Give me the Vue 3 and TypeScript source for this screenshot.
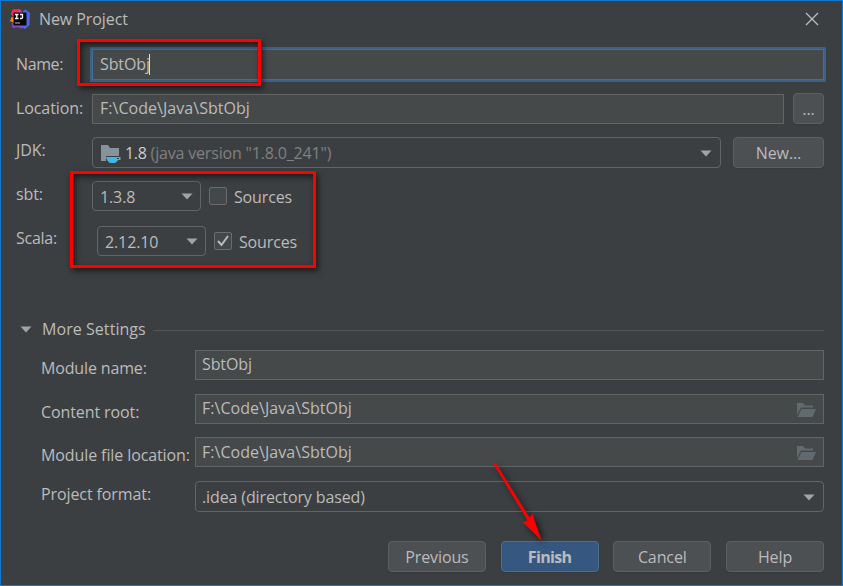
<script setup lang="ts">
import { ref } from 'vue'

const projectName = ref('SbtObj')
const location = ref('F:\\Code\\Java\\SbtObj')
const sbtSources = ref(false)
const scalaSources = ref(true)
</script>

<template>
  <main class="dialog">
    <header class="titlebar">
      <svg class="logo" width="20" height="20" viewBox="0 0 20 20">
        <path d="M2.500.5 10 0l3 4-8 11-3-3 1-4-2-3z" fill="#f52b61" />
        <path d="M1 8.500 4 8v6l-4-2 1-2z" fill="#fc801d" />
        <path d="m13 2 2.500-1.500L20 4l-.5 12-4.500 4-5-3z" fill="#4a68e8" />
        <path d="m2 14 9 2 2 4-5-2-5.500 1z" fill="#8f48cc" />
        <path d="m9 1 4 3H8z" fill="#c645aa" />
        <rect x="3.500" y="3.500" width="13" height="13" fill="#08080b" />
        <path d="M5 5.500h3.500M6.800 5.500v4M5 9.500h3.500M10 5.500h2.500v3q0 1-1.300 1H10" fill="none" stroke="#fff" stroke-width="1.300" />
        <path d="M5 14h5" stroke="#999" stroke-width="1.200" />
      </svg>
      <span class="title">New Project</span>
      <svg class="close" width="14" height="14" viewBox="0 0 14 14"><path d="m1 1 12 12M13 1 1 13" stroke="#bec0c1" stroke-width="1.200" /></svg>
    </header>

    <section class="general">
      <div class="row name-row">
        <label>Name:</label>
        <div class="field focused"><span class="value">{{ projectName }}</span><i class="caret" /></div>
      </div>
      <div class="row location-row">
        <label>Location:</label>
        <div class="field"><span class="value path">{{ location }}</span></div>
        <button class="browse">...</button>
      </div>
      <div class="row jdk-row">
        <label>JDK:</label>
        <div class="combo">
          <svg class="jdk" width="20" height="18" viewBox="0 0 20 18">
            <path d="M0 0h7l2 3h9v8H5v5H0z" fill="#87939a" />
            <path d="M5 12h14.500v3H17q-.8 2-3 3H9q-3-1.500-4-6z" fill="#40b6e0" />
            <path d="M16 13h2v1h-2z" fill="#3c3f41" />
          </svg>
          <span class="version">1.8</span><span class="muted">(java version "1.8.0_241")</span>
          <svg class="arrow" width="12" height="7" viewBox="0 0 12 7"><path d="M.5.500h11L6 6.500z" /></svg>
        </div>
        <button class="new">New...</button>
      </div>
      <div class="row sbt-row">
        <label>sbt:</label>
        <div class="combo small"><span class="num">1.3.8</span><svg class="arrow" width="12" height="7" viewBox="0 0 12 7"><path d="M.5.500h11L6 6.500z" /></svg></div>
        <span class="check" @click="sbtSources = !sbtSources"><svg v-if="sbtSources" width="14" height="14" viewBox="0 0 14 14"><path d="m2 7 3.500 4L12 2" /></svg></span>
        <span class="sources">Sources</span>
      </div>
      <div class="row scala-row">
        <label>Scala:</label>
        <div class="combo small"><span class="num">2.12.10</span><svg class="arrow" width="12" height="7" viewBox="0 0 12 7"><path d="M.5.500h11L6 6.500z" /></svg></div>
        <span class="check" @click="scalaSources = !scalaSources"><svg v-if="scalaSources" width="14" height="14" viewBox="0 0 14 14"><path d="m2 7 3.500 4L12 2" /></svg></span>
        <span class="sources">Sources</span>
      </div>
    </section>

    <div class="separator">
      <svg class="arrow" width="12" height="7" viewBox="0 0 12 7"><path d="M.5.500h11L6 6.500z" /></svg>
      <span class="heading">More Settings</span><hr>
    </div>

    <section class="more">
      <div class="row module-row"><label>Module name:</label><div class="field"><span class="value">{{ projectName }}</span></div></div>
      <div class="row root-row">
        <label>Content root:</label>
        <div class="field"><span class="value path">{{ location }}</span>
          <svg class="folder" width="20" height="15" viewBox="0 0 20 15"><path d="M0 0h6l2 2.500h8v2H4L0 12z" /><path d="M4.500 6H19l-3.500 8H.5z" /></svg>
        </div>
      </div>
      <div class="row file-row">
        <label class="long">Module file location:</label>
        <div class="field"><span class="value path">{{ location }}</span>
          <svg class="folder" width="20" height="15" viewBox="0 0 20 15"><path d="M0 0h6l2 2.500h8v2H4L0 12z" /><path d="M4.500 6H19l-3.500 8H.5z" /></svg>
        </div>
      </div>
      <div class="row format-row">
        <label>Project format:</label>
        <div class="combo"><span class="format">.idea (directory based)</span><svg class="arrow" width="12" height="7" viewBox="0 0 12 7"><path d="M.5.500h11L6 6.500z" /></svg></div>
      </div>
    </section>

    <footer>
      <button>Previous</button>
      <button class="primary">Finish</button>
      <button>Cancel</button>
      <button>Help</button>
    </footer>

    <div class="mark mark-name" />
    <div class="mark mark-versions" />
    <svg class="pointer" width="70" height="90" viewBox="0 0 70 90"><path d="M13.500 13 16 12.500 49.500 66.500 52.500 63 61.500 89.500 42.500 71 47.500 69.500z" /></svg>
  </main>
</template>

<style>
body { background: #3c3f41; overflow: hidden; }
</style>

<style scoped>
* { box-sizing: border-box; }
.dialog { position: relative; width: 843px; height: 586px; border: 1px solid #1179cf; overflow: hidden; background: #3c3f41; color: #bbb; font: 16px/22px "Open Sans", "Noto Sans", sans-serif; white-space: nowrap; }
.titlebar { height: 46px; padding: 8px 22px 0 9px; display: flex; align-items: flex-start; }
.title { margin: -1px 0 0 9px; letter-spacing: -.08px; }
.close { margin: 3px 1px 0 auto; }
.general { height: 266px; padding-left: 15px; }
.row { display: flex; align-items: flex-start; }
label { letter-spacing: -.1px; }
.general label { width: 76px; flex: none; }
.name-row label { letter-spacing: -.4px; }
.scala-row label { letter-spacing: -.25px; }
.more label { width: 153.500px; flex: none; }
.field { height: 30px; border: 1px solid #646464; background: #45494a; display: flex; align-items: center; padding-left: 7px; }
.field .value { margin-top: -2px; letter-spacing: -.1px; }
.field .path { letter-spacing: .04px; }
.focused { position: relative; height: 35px; width: 736px; margin-left: -2px; border: 2px solid #3d6185; box-shadow: inset 0 0 0 1px #466d94; padding-left: 8px; border-radius: 1px; }
.caret { width: 1px; height: 21px; margin-left: -.6px; background: #ddd; }
.combo { height: 31px; border: 1px solid #646464; border-radius: 4px; display: flex; align-items: center; padding: 0 8px 0 7px; }
.arrow { fill: #a1a4a6; flex: none; }
.combo .arrow { margin: 1px 0 0 auto; }
.small .arrow { margin-right: -1px; }
button { height: 31px; padding: 0; border: 1px solid #5e6060; border-radius: 4px; background: #4c5052; color: #bbb; font: inherit; box-shadow: 0 1px 1px #373a3c; }
.name-row { height: 46px; }
.name-row label { padding-top: 6px; }
.location-row { height: 44px; }
.location-row label { padding-top: 4px; }
.location-row .field { width: 692px; margin-top: 1px; }
.browse { width: 31px; margin-left: 9px; }
.jdk-row { height: 44px; }
.jdk-row label { padding-top: 2px; }
.jdk-row .combo { width: 629px; }
.jdk { margin: 3px 4px 0 1px; }
.version { color: #ccc; margin-right: 4px; letter-spacing: -.3px; }
.muted { color: #808080; letter-spacing: -.18px; }
.new { width: 91px; margin-left: 12px; letter-spacing: -.1px; }
.sbt-row { height: 45px; }
.sbt-row label { padding-top: 2px; }
.scala-row label { padding-top: 1px; }
.small { width: 109px; height: 30px; }
.num { padding-top: 2px; letter-spacing: -.12px; }
.scala-row .small { margin-left: 5px; }
.check { width: 18px; height: 18px; margin: 6px 0 0 7.500px; border: 1px solid #6b6b6b; border-radius: 2px; background: #43494a; display: flex; align-items: center; justify-content: center; }
.check path { fill: none; stroke: #bbb; stroke-width: 2; }
.sources { margin: 5px 0 0 7.500px; letter-spacing: -.15px; }
.separator { height: 37px; padding: 5px 18px 0 19px; display: flex; align-items: flex-start; }
.separator .arrow { margin-top: 8px; }
.heading { margin-left: 10px; letter-spacing: .06px; }
.separator hr { flex: 1; height: 1px; border: 0; margin: 12px 0 0 7px; background: #515455; }
.more { padding-left: 40px; height: 191px; }
.more .field, .more .combo { width: 629px; padding-left: 6.500px; }
.module-row, .file-row { height: 44px; }
.root-row { height: 43px; }
.module-row label, .root-row label, .file-row label { padding-top: 7px; }
.module-row label { letter-spacing: -.15px; }
.format-row label { padding-top: 2px; }
.file-row .value { margin-top: 0; }
.file-row .folder { margin-top: 3px; }
.format { letter-spacing: -.12px; }
.folder { margin: 2px 6px 0 auto; fill: #616a6f; }
footer { display: flex; justify-content: flex-end; gap: 14.700px; padding-right: 18px; }
footer button { width: 98px; letter-spacing: -.1px; }
footer .primary { background: #365880; border-color: #4c708c; font-weight: bold; letter-spacing: -.65px; }
.mark { position: absolute; border: 3px solid #f00; box-shadow: 2px 3px 6px #0009, inset 2px 3px 6px #0009; pointer-events: none; }
.mark-name { left: 76px; top: 38px; width: 184px; height: 47px; }
.mark-versions { left: 69px; top: 170px; width: 246px; height: 97px; }
.pointer { position: absolute; left: 479px; top: 450px; fill: #f00; overflow: visible; filter: drop-shadow(3px 3px 3px #000a); pointer-events: none; }
</style>
